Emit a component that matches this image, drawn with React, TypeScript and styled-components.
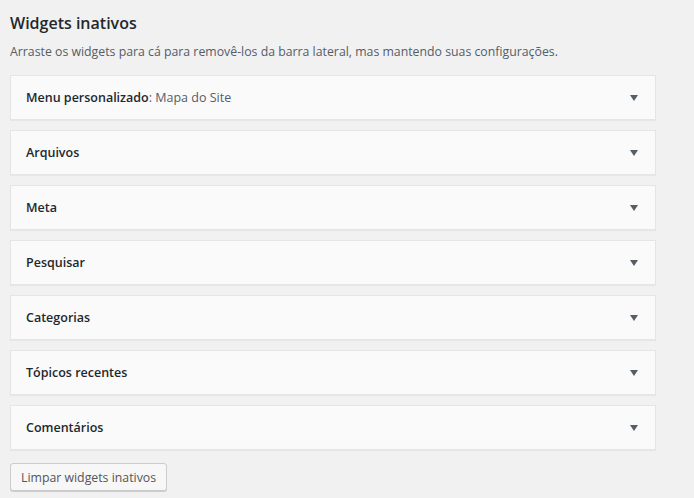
import React from 'react';
import styled, { createGlobalStyle } from 'styled-components';

const GlobalStyle = createGlobalStyle`
  html, body {
    margin: 0;
    padding: 0;
    background: #f1f1f1;
  }
  body {
    font-family: "Open Sans", "Noto Sans", sans-serif;
    color: #23282d;
  }
`;

const Page = styled.div`
  padding: 12px 10px 8px 10px;
  width: 646px;
`;

const Heading = styled.h2`
  margin: 0;
  font-size: 16px;
  font-weight: 600;
  line-height: 22px;
  color: #23282d;
`;

const Description = styled.p`
  margin: 8px 0 14px 0;
  font-size: 12.3px;
  line-height: 19px;
  color: #555d66;
`;

const List = styled.div`
  display: flex;
  flex-direction: column;
  gap: 10px;
`;

const Card = styled.div`
  display: flex;
  align-items: center;
  justify-content: space-between;
  height: 43px;
  padding: 0 15px;
  background: #fafafa;
  border: 1px solid #e5e5e5;
  box-shadow: 0 1px 1px rgba(0, 0, 0, 0.04);
`;

const CardTitle = styled.div`
  font-size: 12.5px;
  font-weight: 600;
  color: #23282d;
`;

const InWidgetTitle = styled.span`
  font-weight: 400;
  color: #555d66;
`;

const Arrow = styled.span`
  width: 0;
  height: 0;
  margin-right: 2px;
  border-left: 4px solid transparent;
  border-right: 4px solid transparent;
  border-top: 6px solid #555d66;
`;

const ClearButton = styled.button`
  margin-top: 13px;
  height: 28px;
  padding: 0 10px;
  font-family: "Open Sans", "Noto Sans", sans-serif;
  font-size: 12.3px;
  color: #555;
  background: #f7f7f7;
  border: 1px solid #ccc;
  border-radius: 3px;
  box-shadow: 0 1px 0 #ccc;
  cursor: pointer;
`;

const widgets: { name: string; title?: string }[] = [
  { name: 'Menu personalizado', title: 'Mapa do Site' },
  { name: 'Arquivos' },
  { name: 'Meta' },
  { name: 'Pesquisar' },
  { name: 'Categorias' },
  { name: 'Tópicos recentes' },
  { name: 'Comentários' },
];

export default function App() {
  return (
    <>
      <GlobalStyle />
      <Page>
        <Heading>Widgets inativos</Heading>
        <Description>
          Arraste os widgets para cá para removê-los da barra lateral, mas mantendo suas configurações.
        </Description>
        <List>
          {widgets.map(w => (
            <Card key={w.name}>
              <CardTitle>
                {w.name}
                {w.title && <InWidgetTitle>: {w.title}</InWidgetTitle>}
              </CardTitle>
              <Arrow />
            </Card>
          ))}
        </List>
        <ClearButton>Limpar widgets inativos</ClearButton>
      </Page>
    </>
  );
}
